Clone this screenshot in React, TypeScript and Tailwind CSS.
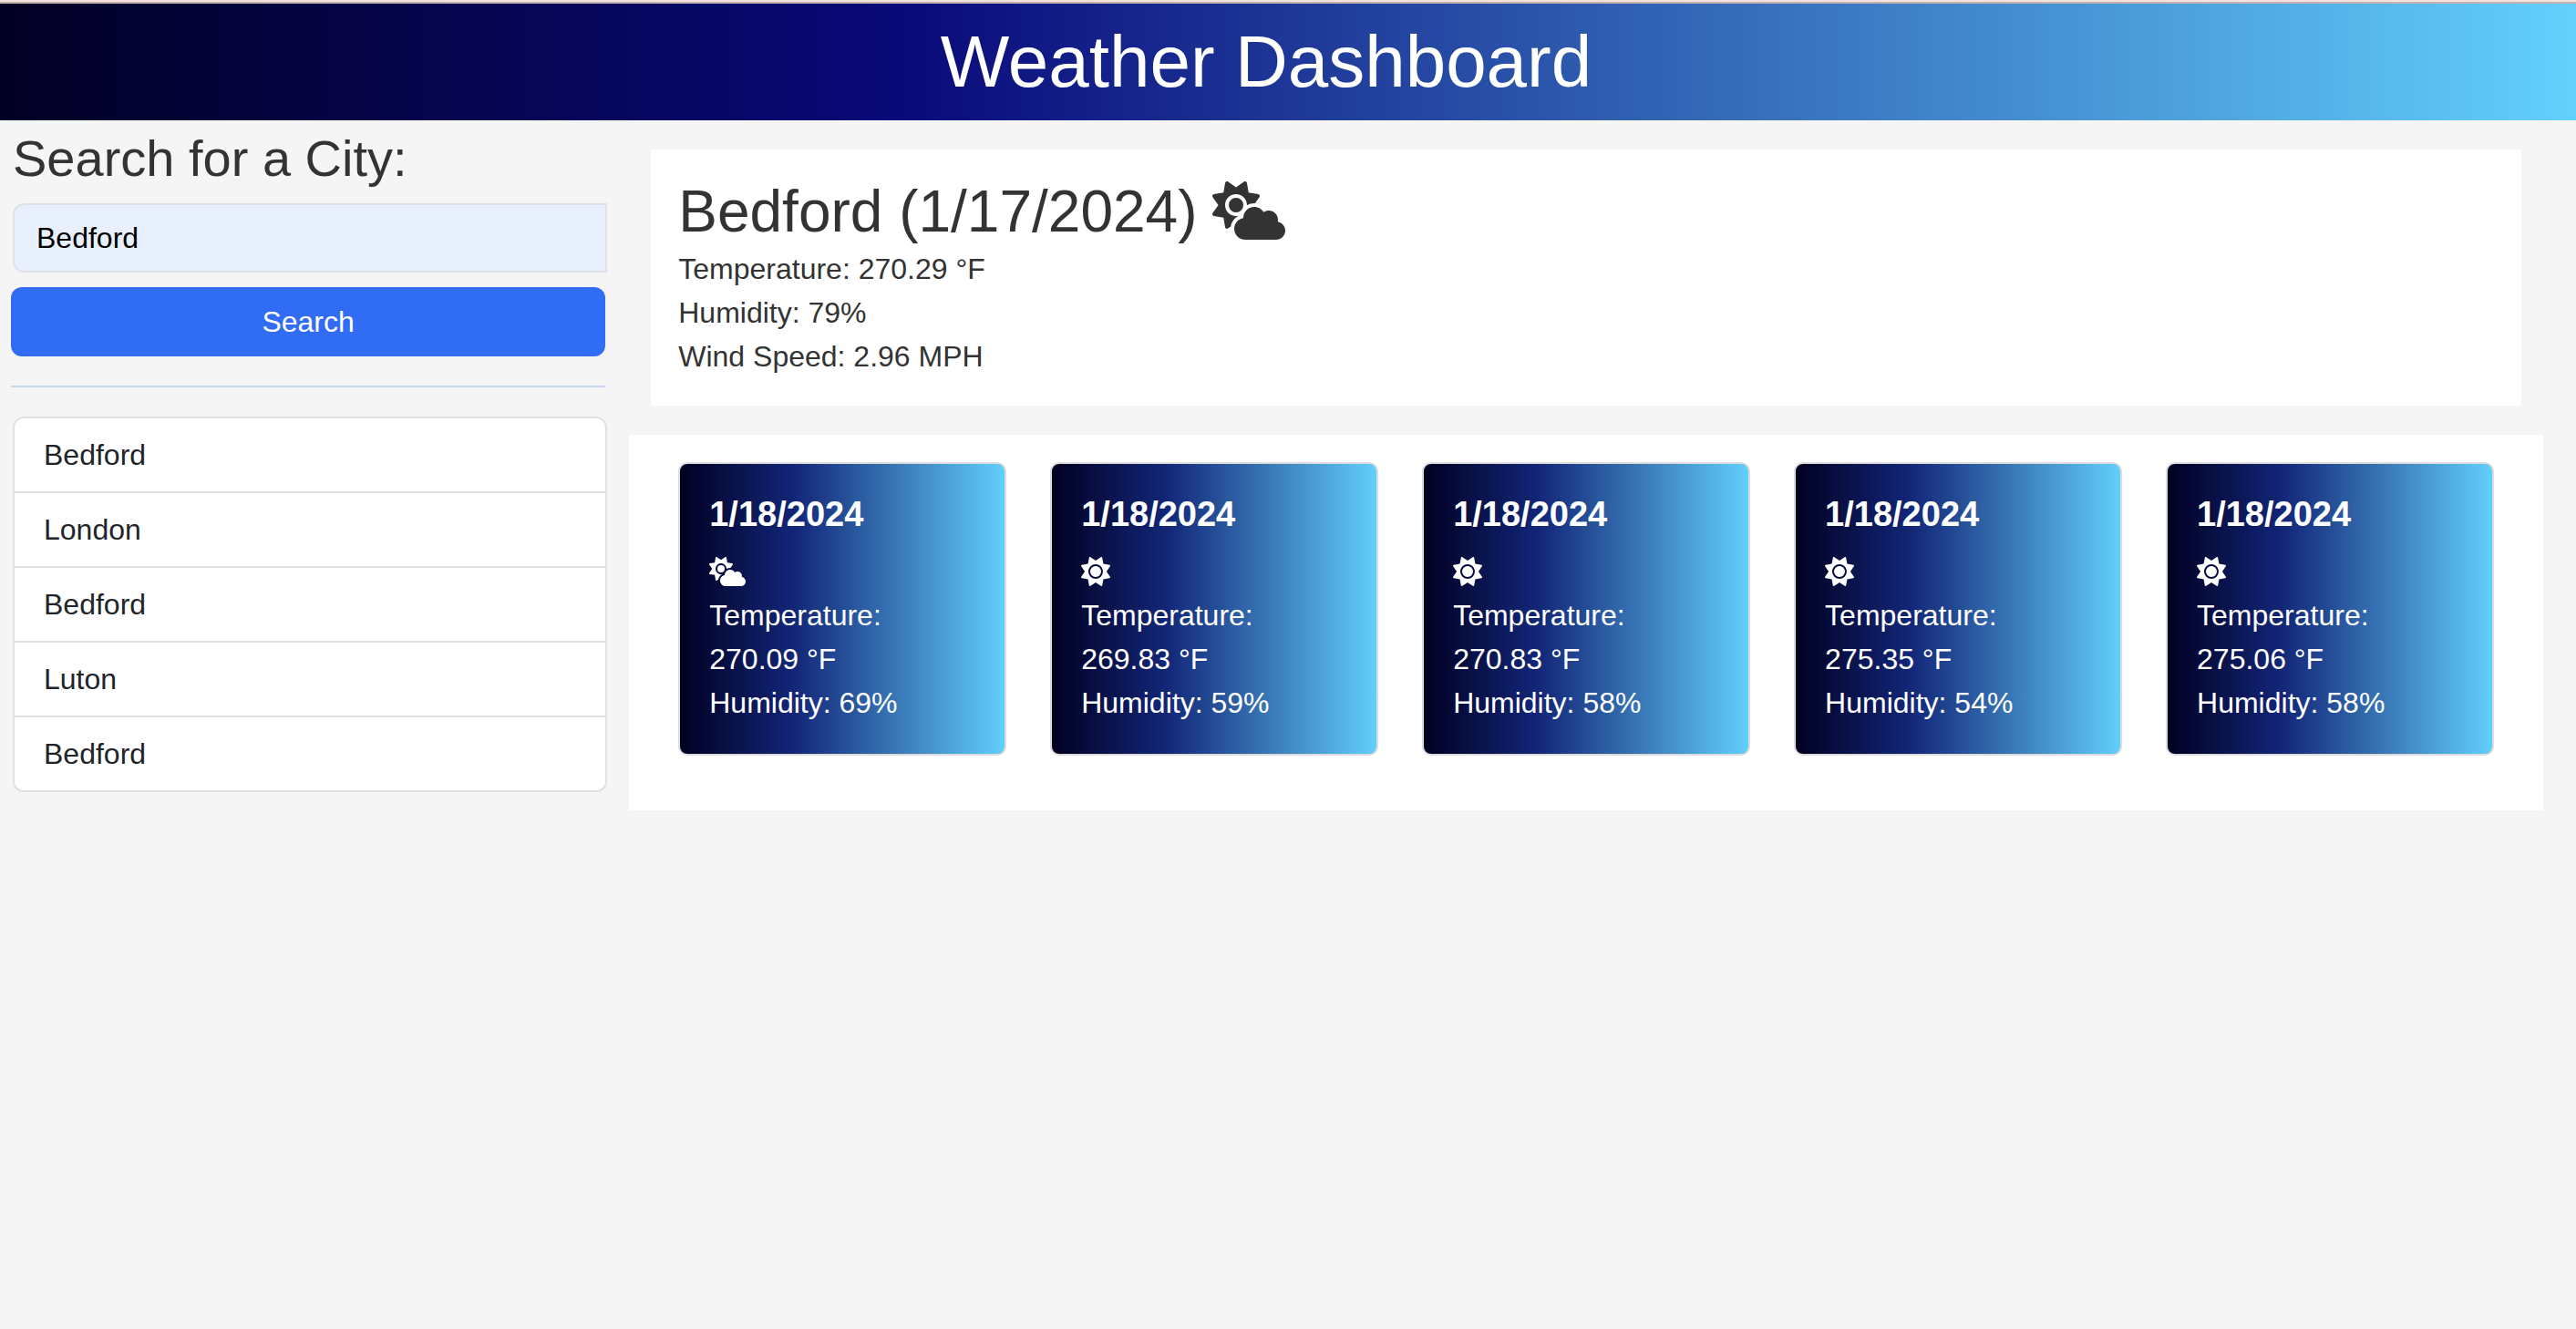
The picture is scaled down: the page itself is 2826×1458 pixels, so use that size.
import { useState } from "react";
import { FaCloudSun, FaSun } from "react-icons/fa6";

const history = ["Bedford", "London", "Bedford", "Luton", "Bedford"];

const forecast = [
  { date: "1/18/2024", icon: "cloud", temp: "270.09", humidity: 69 },
  { date: "1/18/2024", icon: "sun", temp: "269.83", humidity: 59 },
  { date: "1/18/2024", icon: "sun", temp: "270.83", humidity: 58 },
  { date: "1/18/2024", icon: "sun", temp: "275.35", humidity: 54 },
  { date: "1/18/2024", icon: "sun", temp: "275.06", humidity: 58 },
];

function SearchPanel() {
  const [city, setCity] = useState("Bedford");
  return (
    <aside className="w-[24%] shrink-0 pt-2 pr-3.5 pl-3">
      <form onSubmit={(e) => e.preventDefault()}>
        <label htmlFor="city" className="mb-4 ml-0.5 block text-[56px] leading-[67px] text-[#333]">
          Search for a City:
        </label>
        <input
          id="city"
          type="text"
          value={city}
          onChange={(e) => setCity(e.target.value)}
          className="-mr-0.5 ml-0.5 block h-[76px] w-full rounded-l-xl border-2 border-[#dee2e6] bg-[#e8f0fe] px-6 text-black outline-none"
        />
        <button type="submit" className="mt-4 block h-[76px] w-full rounded-xl bg-[#316cf4] text-white">
          Search
        </button>
      </form>
      <hr className="my-8 border-t-2 border-[#c3d6f2]" />
      <ul className="-mr-0.5 ml-0.5 divide-y-2 divide-[#dee2e6] overflow-hidden rounded-xl border-2 border-[#dee2e6] bg-white text-[#212529]">
        {history.map((name, i) => (
          <li key={i} className="px-8 py-4">
            {name}
          </li>
        ))}
      </ul>
    </aside>
  );
}

function CurrentWeather() {
  return (
    <section className="mx-6 bg-white p-[30px] text-[#333]">
      <h2 className="flex items-center gap-4 text-[64px] leading-[77px]">
        Bedford (1/17/2024)
        <FaCloudSun className="mb-1 h-16 w-20" />
      </h2>
      <p>Temperature: 270.29 °F</p>
      <p>Humidity: 79%</p>
      <p>Wind Speed: 2.96 MPH</p>
    </section>
  );
}

function Forecast() {
  return (
    <section className="mt-8 grid grid-cols-5 gap-12 bg-white px-[54px] pt-[30px] pb-[60px]">
      {forecast.map((day, i) => (
        <article
          key={i}
          className="rounded-[10px] border-2 border-[#dcdcdc] bg-[linear-gradient(90deg,#000020_0%,#122577_35%,#62d0fc_100%)] bg-origin-border p-8 text-white"
        >
          <h3 className="mb-4 text-[38px] leading-[46px] font-bold">{day.date}</h3>
          <div className="flex h-12 items-center">
            {day.icon === "cloud" ? <FaCloudSun className="h-8 w-10" /> : <FaSun className="size-8" />}
          </div>
          <p>
            Temperature:
            <br />
            {day.temp} °F
          </p>
          <p>Humidity: {day.humidity}%</p>
        </article>
      ))}
    </section>
  );
}

export default function App() {
  return (
    <div className="min-h-screen bg-[#f5f5f5] font-['Liberation_Sans',Arial,sans-serif] text-[32px] leading-[48px]">
      <div className="h-0.5 bg-[#f4e2de]" />
      <div className="h-0.5 bg-[#c4b2ae]" />
      <header className="bg-[linear-gradient(90deg,#020024_0%,#090979_35%,#62d0fc_100%)] py-4 pr-12 text-center">
        <h1 className="text-[80px] leading-[96px] text-white">Weather Dashboard</h1>
      </header>
      <div className="flex">
        <SearchPanel />
        <main className="min-w-0 grow pt-8 pr-9 pl-3">
          <CurrentWeather />
          <Forecast />
        </main>
      </div>
    </div>
  );
}
